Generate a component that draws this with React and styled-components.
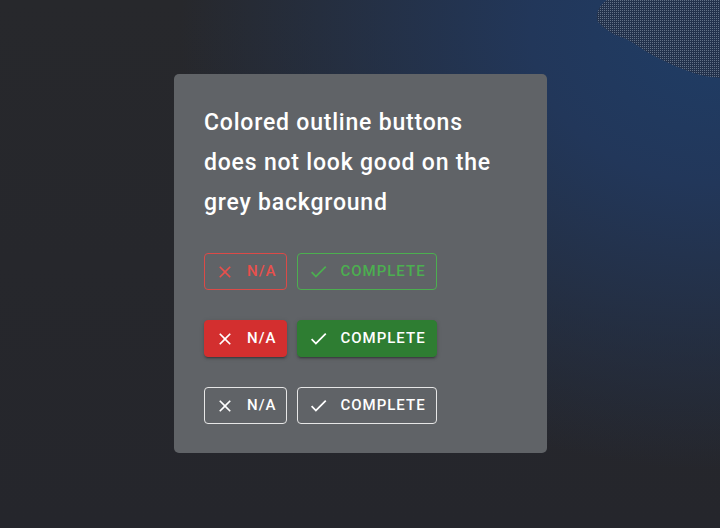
import React from 'react'
import styled, {createGlobalStyle, css} from 'styled-components'

const GlobalStyle = createGlobalStyle`
  html, body {
    margin: 0;
    padding: 0;
  }
  body {
    font-family: Roboto, "Noto Sans", "Liberation Sans", sans-serif;
    -webkit-font-smoothing: antialiased;
  }
`;

function CloseIcon() {
  return (
    <svg width="20" height="20" viewBox="0 0 24 24" fill="currentColor">
      <path d="M19 6.41 17.59 5 12 10.59 6.41 5 5 6.41 10.59 12 5 17.59 6.41 19 12 13.41 17.59 19 19 17.59 13.41 12z"/>
    </svg>
  )
}

function CheckIcon() {
  return (
    <svg width="21" height="21" viewBox="0 0 24 24" fill="currentColor">
      <path d="M9 16.17 4.83 12l-1.42 1.41L9 19 21 7l-1.41-1.41z"/>
    </svg>
  )
}

// speckled blob in the top right corner of the wallpaper
function DotBlob() {
  return (
    <BlobSvg width="124" height="80" viewBox="0 0 124 80">
      <defs>
        <pattern id="dots" width="2" height="2" patternUnits="userSpaceOnUse">
          <rect width="2" height="2" fill="#222f47" />
          <rect width="1" height="1" fill="#6f7b8e" />
        </pattern>
      </defs>
      <path
        d="M11 0 L124 0 L124 78 C112 77 102 75 92 71 C80 67 70 62 58 56 C46 50 36 40 22 36 C12 32 6 26 2 22 C-1 16 2 6 11 0 Z"
        fill="url(#dots)"
        opacity="0.85"
      />
    </BlobSvg>
  )
}

function ActionRow({kind, neutral}) {
  return (
    <Row>
      <ActionButton $kind={kind} $tone={neutral ? 'white' : 'red'}>
        <StartIcon><CloseIcon/></StartIcon>
        N/A
      </ActionButton>
      <ActionButton $kind={kind} $tone={neutral ? 'white' : 'green'}>
        <StartIcon><CheckIcon/></StartIcon>
        COMPLETE
      </ActionButton>
    </Row>
  )
}

function App() {
  return (
    <Page>
      <GlobalStyle/>
      <DotBlob/>
      <Card>
        <Title>
          Colored outline buttons does not look good on the grey background
        </Title>
        <Rows>
          <ActionRow kind="outlined"/>
          <ActionRow kind="contained"/>
          <ActionRow kind="outlined" neutral/>
        </Rows>
      </Card>
    </Page>
  )
}

const tones = {
  red: {main: '#d32f2f', text: '#e8504c', border: '#dc4a47'},
  green: {main: '#2e7d32', text: '#4caf50', border: '#4caf50'},
  white: {main: '#ffffff', text: '#ffffff', border: '#e6e6e6'},
}

let Page = styled.div`
  position: relative;
  width: 720px;
  height: 528px;
  overflow: hidden;
  display: flex;
  align-items: flex-start;
  justify-content: center;
  background:
    radial-gradient(ellipse 540px 440px at 720px 30px, #1f3d66 0%, #22375a 35%, rgba(37,39,45,0) 100%),
    linear-gradient(180deg, #27282c 0%, #25262c 100%);
`;

let BlobSvg = styled.svg`
  position: absolute;
  top: 0;
  right: 0;
`;

let Card = styled.div`
  margin-top: 74px;
  margin-left: 1px;
  width: 373px;
  height: 379px;
  box-sizing: border-box;
  padding: 29px 30px;
  background: #606367;
  border-radius: 5px;
`;

let Title = styled.div`
  color: #ffffff;
  font-size: 23px;
  font-weight: 500;
  letter-spacing: 0.8px;
  line-height: 40px;
  max-width: 300px;
`;

let Rows = styled.div`
  display: flex;
  flex-direction: column;
  gap: 30px;
  margin-top: 30px;
`;

let Row = styled.div`
  display: flex;
  gap: 10px;
`;

let ActionButton = styled.button`
  display: inline-flex;
  align-items: center;
  box-sizing: border-box;
  height: 37px;
  padding: 0 10px;
  border-radius: 4px;
  font-family: Roboto, "Liberation Sans", sans-serif;
  font-size: 15px;
  font-weight: 500;
  letter-spacing: 1px;
  line-height: 1;
  cursor: pointer;
  ${({$kind, $tone}) => $kind === 'contained'
    ? css`
      background: ${tones[$tone].main};
      color: #ffffff;
      border: 1px solid ${tones[$tone].main};
      box-shadow: 0 3px 1px -2px rgba(0,0,0,0.2), 0 2px 2px 0 rgba(0,0,0,0.14), 0 1px 5px 0 rgba(0,0,0,0.12);
    `
    : css`
      background: transparent;
      color: ${tones[$tone].text};
      border: 1px solid ${tones[$tone].border};
    `}
`;

let StartIcon = styled.span`
  display: inline-flex;
  width: 21px;
  margin-right: 11px;
`;

export default App
